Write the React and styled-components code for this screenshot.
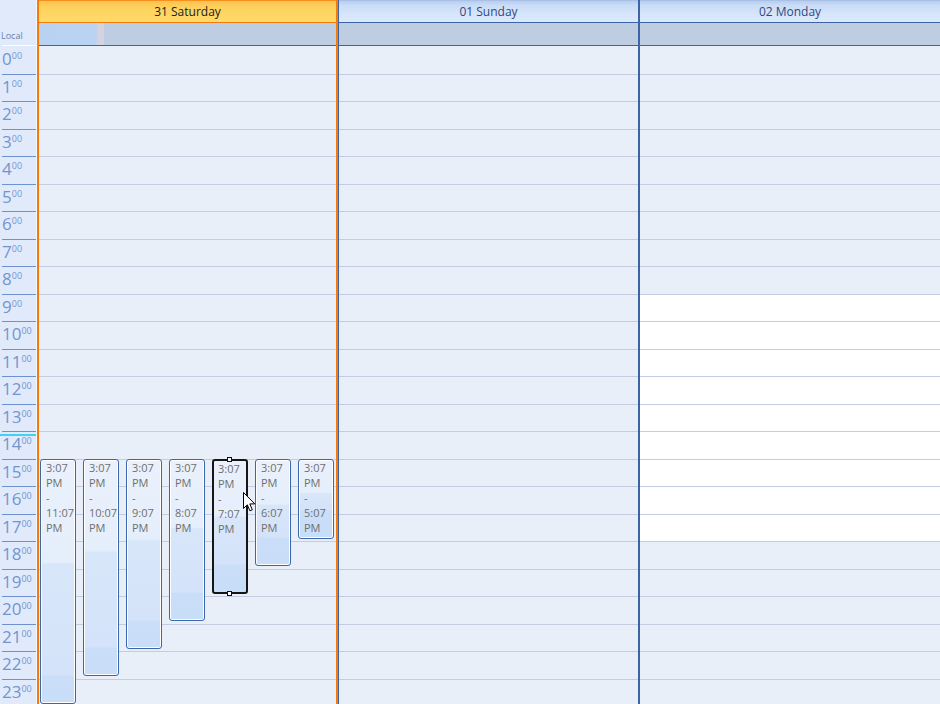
import React from 'react';
import styled, { createGlobalStyle, css } from 'styled-components';

const SLOT = 27.5;
const HOURS = Array.from({ length: 24 }, (_, i) => i);

const GlobalStyle = createGlobalStyle`
  html, body {
    margin: 0;
    padding: 0;
    background: #e8eff9;
    font-family: "Open Sans", "Noto Sans", sans-serif;
  }
`;

//#region --- Styled Components ---
const Calendar = styled.div`
  display: grid;
  grid-template-columns: 37px repeat(3, 1fr);
  width: 940px;
  height: 704px;
  overflow: hidden;
  background: #e8eff9;
`;

const TimeColumn = styled.div`
  display: flex;
  flex-direction: column;
  background: #e1eafb;
  border-right: 1px solid #f3f7fe;
  position: relative;
`;

const TimeHeader = styled.div`
  box-sizing: border-box;
  height: 46px;
  flex: none;
  display: flex;
  align-items: flex-end;
  padding: 0 0 1px 1px;
  border-bottom: 1px solid #fbfdff;
  margin-left: 2px;
`;

const LocalLabel = styled.span`
  font-size: 9px;
  line-height: 14px;
  color: #6a80aa;
  margin-left: -2px;
  margin-bottom: 1px;
`;

const TimeSlot = styled.div`
  box-sizing: border-box;
  height: ${SLOT}px;
  flex: none;
  margin-left: 2px;
  padding-top: 4px;
  color: #7395cf;
  font-size: 17px;
  line-height: 17px;
  white-space: nowrap;

  & + & {
    border-top: 1px solid #6d92cd;
    padding-top: 3px;
  }
`;

const Minutes = styled.span`
  font-size: 9px;
  line-height: 9px;
  vertical-align: top;
  position: relative;
  top: 1px;
`;

const NowLine = styled.div`
  position: absolute;
  left: 0;
  right: 0;
  top: 434px;
  height: 2px;
  background: #3fd2f3;
`;

const DayColumn = styled.div`
  display: flex;
  flex-direction: column;
  min-width: 0;
  border-left: ${({ $today }) => ($today ? '2px solid #f77a0c' : '1px solid #3d65a6')};
  border-right: ${({ $today, $last }) =>
    $today ? '2px solid #f77a0c' : $last ? 'none' : '1px solid #3d65a6'};
`;

const DayHeader = styled.div`
  box-sizing: border-box;
  height: 23px;
  flex: none;
  display: flex;
  align-items: center;
  justify-content: center;
  font-size: 12px;
  ${({ $today }) =>
    $today
      ? css`
          color: #1c1c1c;
          border-top: 1px solid #f7901c;
          border-bottom: 1px solid #f77a0c;
          background: linear-gradient(#fdc352 0%, #ffd25d 35%, #ffdb6a 100%);
        `
      : css`
          color: #2d4a80;
          border-top: 1px solid #a9c1e6;
          border-bottom: 1px solid #3d65a6;
          background: linear-gradient(#b8cdee 0%, #cadcf7 22%, #d6e5fb 60%, #dce9fc 100%);
        `}
`;

const AllDay = styled.div`
  box-sizing: border-box;
  height: 23px;
  flex: none;
  display: flex;
  background: #bfcde3;
  border-bottom: 1px solid #3d65a6;
  padding-left: 1px;
`;

const AllDayMark = styled.div`
  width: 64px;
  background: linear-gradient(to right, #b9d2f1 0%, #bad3f1 88%, #d4d3df 90%, #d4d3df 100%);
`;

const DayBody = styled.div`
  flex: 1;
  display: flex;
  flex-direction: column;
  position: relative;
`;

const Slot = styled.div`
  box-sizing: border-box;
  height: ${SLOT}px;
  flex: none;
  background: ${({ $work }) => ($work ? '#ffffff' : '#e8eff9')};

  & + & {
    border-top: 1px solid ${({ $today }) => ($today ? '#8ea5d0' : '#c3cce2')};
  }
`;

const EventLane = styled.div`
  position: absolute;
  top: ${15 * SLOT}px;
  left: 1px;
  right: 2px;
  display: flex;
  align-items: flex-start;
  gap: 7px;
`;

const Event = styled.div`
  box-sizing: border-box;
  position: relative;
  width: 36px;
  flex: none;
  border: 1px solid #3b67ad;
  border-radius: 3px;
  box-shadow: inset 0 0 0 1px #ffffff;
  background: linear-gradient(
    #eaf1fc 0%,
    #e5eefb 42%,
    #d8e6fa 43%,
    #d4e3f9 calc(100% - 28px),
    #cadef8 calc(100% - 27px),
    #c8ddf8 100%
  );
  padding: 0 0 0 5px;
  font-size: 11px;
  line-height: 15px;
  color: #6f6f6f;

  ${({ $selected }) =>
    $selected &&
    css`
      border: 2px solid #161616;
      padding: 0 0 0 4px;
      box-shadow: none;
    `}
`;

const Handle = styled.span`
  position: absolute;
  left: 50%;
  width: 5px;
  height: 5px;
  margin-left: -3px;
  box-sizing: border-box;
  background: #ffffff;
  border: 1px solid #111111;
  ${({ $bottom }) => ($bottom ? 'bottom: -4px;' : 'top: -4px;')}
`;

const Cursor = styled.svg`
  position: absolute;
  left: 29px;
  top: 31px;
  overflow: visible;
`;
//#endregion

const days = [
  { label: '31 Saturday', today: true },
  { label: '01 Sunday' },
  { label: '02 Monday', workday: true, last: true },
];

const events = [
  { end: '11:07', endHour: 23 },
  { end: '10:07', endHour: 22 },
  { end: '9:07', endHour: 21 },
  { end: '8:07', endHour: 20 },
  { end: '7:07', endHour: 19, selected: true },
  { end: '6:07', endHour: 18 },
  { end: '5:07', endHour: 17 },
];

function ArrowCursor() {
  return (
    <Cursor width="13" height="20" viewBox="0 0 13 20">
      <path
        d="M0.5 0.5 L0.5 16.5 L4.3 12.8 L6.9 18.8 L9.3 17.8 L6.8 11.9 L11.8 11.9 Z"
        fill="#ffffff"
        stroke="#000000"
        strokeWidth="1"
        strokeLinejoin="round"
      />
    </Cursor>
  );
}

export default function App() {
  return (
    <>
      <GlobalStyle />
      <Calendar>
        <TimeColumn>
          <TimeHeader>
            <LocalLabel>Local</LocalLabel>
          </TimeHeader>
          {HOURS.map((h) => (
            <TimeSlot key={h}>
              {h}
              <Minutes>00</Minutes>
            </TimeSlot>
          ))}
          <NowLine />
        </TimeColumn>

        {days.map((day) => (
          <DayColumn key={day.label} $today={day.today} $last={day.last}>
            <DayHeader $today={day.today}>{day.label}</DayHeader>
            <AllDay>{day.today && <AllDayMark />}</AllDay>
            <DayBody>
              {HOURS.map((h) => (
                <Slot key={h} $today={day.today} $work={day.workday && h >= 9 && h < 18} />
              ))}

              {day.today && (
                <EventLane>
                  {events.map((ev) => (
                    <Event
                      key={ev.end}
                      $selected={ev.selected}
                      style={{ height: (ev.endHour + 1 - 15) * SLOT - 2.5 }}
                    >
                      3:07
                      <br />
                      PM
                      <br />
                      -
                      <br />
                      {ev.end}
                      <br />
                      PM
                      {ev.selected && (
                        <>
                          <Handle />
                          <Handle $bottom />
                          <ArrowCursor />
                        </>
                      )}
                    </Event>
                  ))}
                </EventLane>
              )}
            </DayBody>
          </DayColumn>
        ))}
      </Calendar>
    </>
  );
}
